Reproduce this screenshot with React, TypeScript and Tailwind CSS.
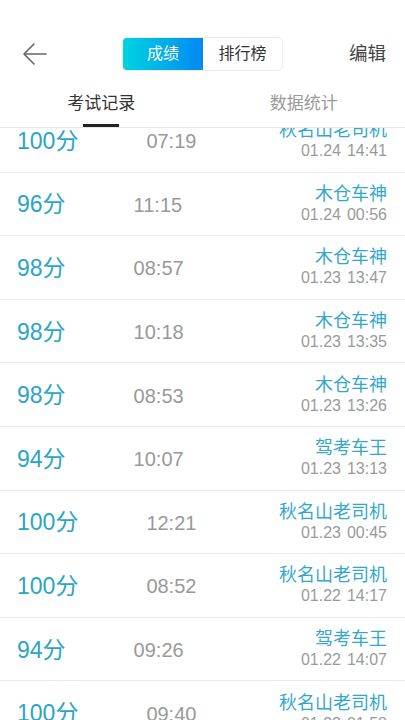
const records = [
  { score: 100, time: "07:19", name: "秋名山老司机", day: "01.24", at: "14:41" },
  { score: 96, time: "11:15", name: "木仓车神", day: "01.24", at: "00:56" },
  { score: 98, time: "08:57", name: "木仓车神", day: "01.23", at: "13:47" },
  { score: 98, time: "10:18", name: "木仓车神", day: "01.23", at: "13:35" },
  { score: 98, time: "08:53", name: "木仓车神", day: "01.23", at: "13:26" },
  { score: 94, time: "10:07", name: "驾考车王", day: "01.23", at: "13:13" },
  { score: 100, time: "12:21", name: "秋名山老司机", day: "01.23", at: "00:45" },
  { score: 100, time: "08:52", name: "秋名山老司机", day: "01.22", at: "14:17" },
  { score: 94, time: "09:26", name: "驾考车王", day: "01.22", at: "14:07" },
  { score: 100, time: "09:40", name: "秋名山老司机", day: "01.22", at: "01:58" },
];

export default function App() {
  return (
    <div className="h-[720px] w-[405px] overflow-hidden bg-white font-['Liberation_Sans','Noto_Sans_CJK_SC',sans-serif]">
      {/* Top bar */}
      <div className="mt-[20px] flex h-[68px] items-center pl-[22px] pr-[19px]">
        <button className="flex h-[30px] w-[28px] items-center">
          <svg width="26" height="24" viewBox="0 0 26 24" fill="none" stroke="#666" strokeWidth="1.6" strokeLinecap="round" strokeLinejoin="round">
            <path d="M24 12H3" />
            <path d="M12 2L2 12l10 10" />
          </svg>
        </button>
        <div className="ml-[72px] flex h-[34px] w-[161px] overflow-hidden rounded-[5px] border border-[#ececec]">
          <div className="flex w-[80px] items-center justify-center bg-gradient-to-r from-[#00d3df] to-[#0a88f2] text-[16px] text-white">
            成绩
          </div>
          <div className="flex flex-1 items-center justify-center text-[16px] text-[#333]">
            排行榜
          </div>
        </div>
        <div className="ml-auto text-[18.5px] text-[#444]">编辑</div>
      </div>

      {/* Tabs */}
      <div className="flex h-[40px] border-b border-[#e6e6e6]">
        <div className="relative flex flex-1 justify-center pt-[4px]">
          <span className="text-[17px] leading-[24px] text-[#333]">考试记录</span>
          <div className="absolute bottom-0 left-[83px] h-[3px] w-[36px] bg-[#222]" />
        </div>
        <div className="flex flex-1 justify-center pt-[4px]">
          <span className="text-[17px] leading-[24px] text-[#999]">数据统计</span>
        </div>
      </div>

      {/* Records list */}
      <div className="h-[592px] overflow-hidden">
        <div className="-mt-[19px]">
          {records.map((r, i) => (
            <div
              key={i}
              className="flex h-[63.6px] items-center border-b border-[#e9ecee] pl-[17px] pr-[18px]"
            >
              <span className="pt-[2px] text-[23px] leading-none text-[#2aa4c9]">{r.score}分</span>
              <span className="ml-[68px] pt-[2px] text-[20px] leading-none text-[#999]">{r.time}</span>
              <div className="ml-auto flex flex-col items-end">
                <span className="text-[18px] leading-[22px] text-[#33a8cc]">{r.name}</span>
                <span className="flex gap-[6px] text-[16px] leading-[20px] text-[#9a9a9a]">
                  <span>{r.day}</span>
                  <span>{r.at}</span>
                </span>
              </div>
            </div>
          ))}
        </div>
      </div>
    </div>
  );
}
